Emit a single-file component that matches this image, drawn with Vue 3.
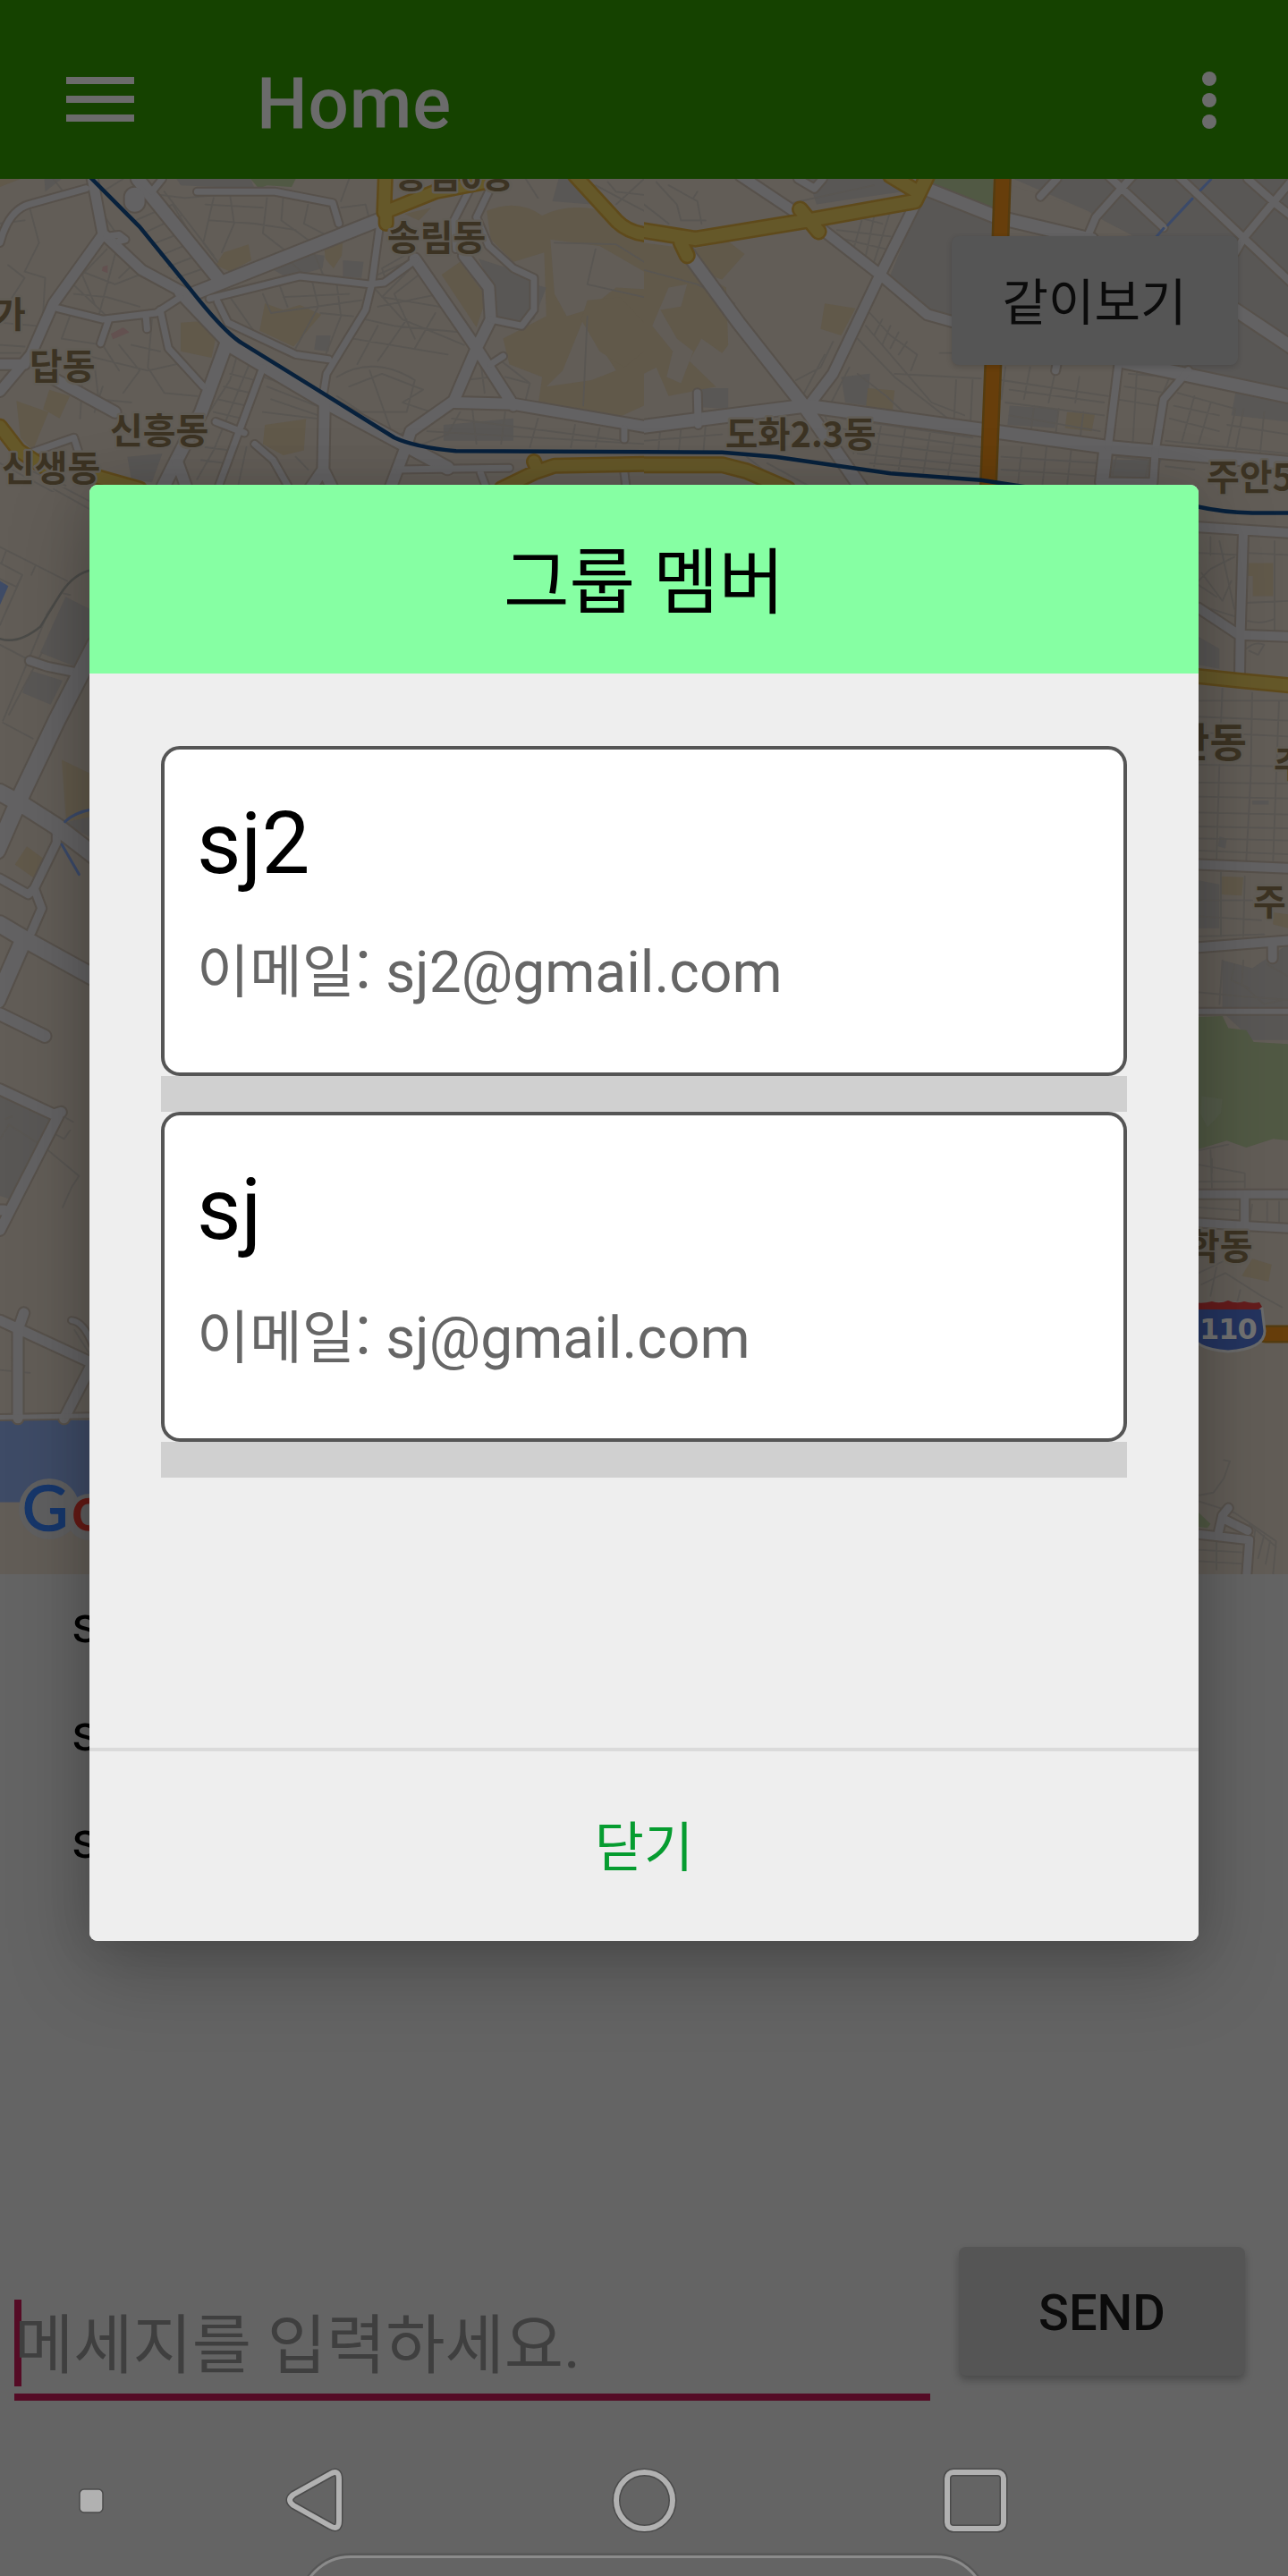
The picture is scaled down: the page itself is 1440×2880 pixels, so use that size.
<script setup>
import { ref } from 'vue'

const members = ref([
  { name: 'sj2', email: 'sj2@gmail.com' },
  { name: 'sj', email: 'sj@gmail.com' },
])
const messages = ref(['s', 's', 's'])

// Each tile keeps its own local grid; strokes stay in screen pixels.
const tiles = [
  {
    id: 'nw',
    transform: 'scale(0.4592 0.35714)',
    areas: [
      { c: 'hill', d: 'M525 830L545 790L605 765L612 815L560 850ZM790 780L835 750L832 800L812 840L792 810ZM645 950L690 970L730 955L782 985L715 1085L632 1035ZM440 1010L495 1005L530 1030L515 1120L440 1100ZM1075 860L1120 820L1185 930L1160 1025ZM1185 660Q1260 620 1320 675Q1390 630 1480 665L1568 750V1270L1500 1310L1420 1280L1310 1270L1320 1180L1240 1140L1225 1060L1330 990L1325 790L1250 820L1195 750ZM40 1255L118 1290L80 1410L50 1370ZM120 1220L170 1240L145 1310L105 1280ZM645 1330L745 1312L740 1410L690 1425L640 1390ZM0 560H50L0 585ZM985 670L1050 650L1020 690Z' },
      { c: 'land', d: 'M1340 750L1460 770L1568 850V905L1500 900L1430 970L1380 990L1350 920ZM1420 1000L1370 1160L1330 1210L1440 1190L1500 1160Z' },
      { c: 'hill', d: 'M1430 940L1510 930L1568 1010V1100L1520 1150L1460 1100L1415 1000Z' },
      { c: 'block', d: 'M1165 810L1250 845L1300 890L1330 900L1300 1000L1250 1010L1205 985L1195 890ZM660 840L735 790L790 800L785 840L700 870ZM835 815L885 820L880 870L835 865ZM430 560H610L620 590L440 580ZM1360 560H1410L1440 640L1345 630ZM310 1430L395 1420L370 1510L320 1500ZM1080 1330L1250 1310V1380L1080 1380ZM770 1050L805 1050L800 1100L765 1095ZM108 560H150L110 600Z' },
      { c: 'park', d: 'M610 560H720L710 585L650 580L630 590Z' },
      { c: 'pink', d: 'M250 835L262 830L262 855L248 848ZM270 1045L300 1025L315 1040L275 1062Z' },
    ],
    minor: 'M70 640L95 760L60 850L110 870L105 980M0 700L60 690M20 830L60 870L20 950M130 560L160 610M250 600L300 560M235 640L330 820L290 870M260 780L200 860L230 950M170 880L260 990M200 850L280 890L340 860M180 920L260 930L340 960M290 750L240 990M330 690L420 640L510 830M350 730L440 675M370 765L460 720M390 800L475 755M410 835L500 790M430 870L520 830M400 600L520 800M390 610L450 620L620 600M520 620L495 760L530 820M560 610L570 700L540 790M650 620L640 730L690 780M690 610L685 690L760 760M750 640L740 700L800 740M830 650L890 640L900 690M850 560L830 630M500 640L640 650M510 690L620 700L720 720M700 810L740 860M760 780L790 870M960 720L985 800L930 840L940 880M990 820L920 860M1000 840L930 930L1070 960M1020 860L960 920L1010 1060M910 900L980 1000L1130 1080M920 960L1070 920M890 1000L960 1020L1120 1040M860 1060L1090 1110M920 1020L870 1140M990 1000L920 1130M1060 980L1010 1090M680 890L700 960M760 880L775 960L720 1090M820 890L830 990L790 1120M560 930L620 1040M640 920L660 980L880 940M690 930L850 920M780 980L860 990M820 1180Q910 1110 1010 1190L990 1290L880 1290L820 1240M850 1210L930 1170L1030 1220L980 1260L1050 1290M870 1290L940 1380L990 1350M900 1160L950 1340M170 990L150 1060L250 1080L290 1160M200 1110L360 1160L430 1140M290 1080L340 1160L300 1230M230 1140L240 1250L320 1260M370 1000L360 1150L400 1230L480 1240M320 1080L390 1100M0 1080L60 1085M0 1105L50 1105M0 1010L90 1020M250 1210L230 1290M200 1200L195 1310M580 1100L560 1190L500 1310M610 1130L520 1410L480 1500M560 1170L620 1190M545 1210L610 1230M530 1250L600 1270M520 1290L590 1310M500 1400L560 1410M490 1440L550 1450M640 1180L780 1240M650 1210L770 1270M660 1250L775 1300M600 1400L580 1520M640 1290L770 1310M720 1430L750 1470M1120 1290L1090 1360L1030 1390M1150 1280L1160 1390M1230 1290L1220 1390M1310 1310L1290 1400M1400 1330L1390 1400M1460 1340L1450 1400M1040 1350L1568 1390M1100 1310L1520 1380M1130 1190L1200 1180L1220 1240M1170 1130L1180 1230M1220 1130L1290 1200L1280 1250M1230 1180L1290 1200M1430 990L1420 1270M1450 780L1430 890L1568 930M1350 760L1500 765L1568 820M1280 560L1310 620M1450 580L1568 660M1480 570L1500 600L1568 610M1500 640L1568 560M0 1450L170 1568M50 1460L160 1520',
    roads: [
      { w: 11, d: 'M225 560L250 730L345 845L460 925M250 735L130 950L75 1110L0 1225M0 1140L60 1140' },
      { w: 14, d: 'M335 560L530 870M470 920L920 690M440 915L570 1090L800 1265L1090 1465M550 1080L490 1290L430 1440L395 1530' },
      { w: 12, d: 'M430 1440L455 1530M130 1185L280 1290M790 1260L787 1470L810 1530M787 1470L755 1530M1010 810L1160 1090L1250 1270M1160 1090L1105 1255L1000 1350L985 1410L950 1530M1105 1260L1250 1265L1568 1335M1130 800L1190 900L1195 1000L1160 1090' },
      { w: 7, d: 'M480 600L670 600L810 635L825 700M0 760Q20 660 70 640L210 590M340 560L370 600L395 560M510 935L730 865L900 890L935 885L1010 815M925 700L905 890L890 970L795 1170L785 1250M530 945L555 1010L720 1110L800 1125M140 965L250 1000L380 980L440 930M390 970L410 1090L495 1210M265 1000L245 1075M355 985L358 1030M640 1150L530 1530M525 1320L595 1355M620 1390L665 1440L705 1530M80 1415L180 1370L190 1410M1195 1140L1225 1115M1520 1340L1520 1375M260 740L290 735L305 750L290 755M1195 1000L1270 1020L1300 970L1300 870L1250 840L1190 770L1160 680L1190 600M1145 590L1105 690L1110 780M970 1470L1240 1465M1170 1480L1185 1530M1520 1480L1525 1530' },
      { w: 22, d: 'M328 618L328 632' },
    ],
    yellow: [
      { w: 13, d: 'M938 560L935 665L1060 600L1180 570M940 660L940 700M1400 550L1500 690Q1530 730 1580 735M0 1335L45 1410L105 1460M230 1490L340 1530M1580 1452L1350 1458L1300 1480L1220 1530M1300 1445L1310 1475' },
    ],
    rail: 'M220 555L340 710L460 900Q545 1040 590 1075L760 1210L960 1370Q1010 1400 1110 1412L1570 1415',
  },
  {
    id: 'ne',
    transform: 'translate(720 0) scale(0.4592 0.35714)',
    areas: [
      { c: 'block', d: 'M400 560H600L630 600L520 620L420 640ZM680 610L850 690L850 1000L700 980L600 860ZM900 560L1568 560V1240L1300 1160L1180 1130L1180 740L1080 660ZM480 1180L550 1170L545 1270L490 1260ZM140 1215L205 1215L205 1280L140 1275ZM890 1270L1010 1280L1000 1340L885 1330ZM1130 1440L1260 1440L1240 1510L1130 1510ZM1440 1230L1568 1260V1320L1430 1300Z' },
      { c: 'park', d: 'M700 560H850V650L700 600Z' },
      { c: 'land', d: 'M895 580L1060 650L1190 738L1080 735L900 690Z' },
      { c: 'hill', d: 'M0 760L120 780L205 755L245 795L190 875L130 850L200 900L205 1080L190 1105L140 1060L110 1130L175 1210L60 1240L30 1150L0 1170ZM440 950L515 965L480 1050L430 1030ZM545 1215L610 1222L605 1290L540 1280ZM1030 1290L1098 1295L1090 1350L1025 1340Z' },
      { c: 'land', d: 'M60 900L105 890L90 960L40 970L80 1060L120 1100L90 1200L55 1180L70 1100L20 1020Z' },
    ],
    minor: 'M0 640L60 700M30 570L80 640L90 690L150 690M60 580L130 630L140 700M120 620L130 600M360 635L560 580M0 845L130 890L220 950M470 720L600 740M490 690L520 680L580 700M530 690L510 780M560 680L540 800M600 660L560 820M460 740L590 780M550 980L600 1050L665 1110L650 1160M540 1020L700 1260L780 1300M520 1060L610 1180L750 1320M580 1000L560 1050M600 1020L580 1080M620 1040L600 1090M640 1070L620 1110M460 1070L430 1150L370 1190M440 1110L390 1230M610 1170L820 1185M760 1190L755 1310M800 1190L795 1320M500 1150L440 1300M520 1170L590 1240L640 1300M870 1190L1130 1240M880 1150L870 1250M940 1150L925 1250M1000 1170L985 1260M1060 1180L1050 1260M890 1220L1120 1260M880 1260L1120 1300M890 1300L1110 1350M950 1270L940 1370M1010 1280L1000 1380M1070 1290L1060 1390M1180 1170L1280 1180L1250 1270L1150 1250M1170 1210L1270 1230M1200 1160L1190 1390M1300 1230L1440 1280L1420 1400M1290 1270L1400 1300M1280 1310L1400 1350M1340 1240L1310 1380M1380 1260L1350 1390M1460 1280L1440 1410M1510 1290L1500 1420M1420 1330L1568 1360M1270 1380L1568 1420M440 1300L470 1400L540 1510M480 1310L800 1370M470 1340L820 1400M500 1380L820 1430M520 1420L820 1460M550 1450L810 1480M530 1300L510 1420M580 1310L560 1460M640 1310L620 1470M700 1330L680 1480M760 1340L740 1490M0 1350L200 1310M0 1380L190 1360M40 1340L35 1410M90 1340L85 1410M150 1330L145 1410M870 1430L1110 1450M870 1470L1100 1490M920 1400L910 1520M980 1400L970 1520M1040 1410L1030 1520M1150 1430L1230 1440L1220 1500L1140 1490ZM1270 1460L1340 1470M250 1430L330 1510M300 1450L400 1520M720 1105L750 1105',
    roads: [
      { w: 11, d: 'M235 550L375 670M415 700L575 860L690 985L760 1010M660 640L575 860L460 1170L395 1280' },
      { w: 14, d: 'M105 790L230 1010L395 1280L530 1530M0 1335L395 1270L820 1345L1130 1400L1568 1450M685 590L860 680L1090 750M1160 1130L1568 1240M1440 970L1580 1090M1125 1400L1115 1510' },
      { w: 8, d: 'M375 560L415 590L435 560M965 615L1005 560M1130 550L1265 712M1190 550L1100 680L1080 740M1300 550L1460 745L1580 890M1470 560L1540 640L1580 680M1580 560L1460 745L1440 790M1155 1140L1130 1400M1325 1160L1265 1250L1245 1410L1240 1510M130 1230L132 1330M1110 1508L1240 1510M1005 1140L1002 1160' },
    ],
    yellow: [
      { w: 14, d: 'M-10 720L125 748L400 690L660 630L690 550M600 550L665 600M380 655L425 725M90 760L105 800M-10 1455L190 1455L250 1475L350 1530' },
    ],
    orange: 'M873 550L868 740L850 1142L838 1530',
    rail: 'M-5 1415L190 1416L320 1430L600 1482L820 1503L960 1530',
    stream: 'M1380 562L1355 595M1335 622L1275 705M1265 715L1245 745',
  },
  {
    id: 'west',
    transform: 'translate(0 520) scale(0.33333 0.44643)',
    areas: [
      { c: 'block', d: 'M220 330L300 360V440L255 505L135 470ZM105 515L210 540L170 600L75 570ZM220 895L300 880V930L260 915Z' },
      { c: 'hill', d: 'M207 738L310 775V880L222 893ZM90 955L145 985L115 1035L50 1000Z' },
      { c: 'water', d: 'M0 290L28 303L0 350Z' },
    ],
    minor: 'M0 205L225 290M0 245L75 275L55 305L0 285M20 215L5 245M120 250L105 275M75 275L0 400M0 450L95 487M150 390L10 640M155 375L205 320L235 325M30 625L140 470M10 645L110 685M180 60L300 110M210 55L300 90M430 0L450 40',
    roads: [
      { w: 9, d: 'M100 490L160 505L260 520M0 1035L95 1075L115 1060L190 945L190 915M115 1060L140 1110L105 1170' },
      { w: 18, d: 'M320 450L190 640L75 820L-10 965M0 820L75 850L190 905L320 980M0 1150L90 1190L320 1285M75 1195L-10 1340' },
      { w: 13, d: 'M0 1375L150 1430' },
    ],
    yellow: [],
    track: 'M0 435Q60 450 135 405L205 320Q250 270 310 262',
    stream: 'M218 893Q250 870 310 862M207 950L265 1025',
  },
  {
    id: 'southwest',
    transform: 'translate(0 1200) scale(0.33333 0.63776)',
    areas: [
      { c: 'block', d: 'M0 40L165 80L30 220L0 215Z' },
      { c: 'water', d: 'M0 608H310V752H0Z' },
    ],
    minor: 'M0 115L30 90L150 130L265 180L240 200L210 235M20 80L40 75M180 105L215 115L235 100M245 85L210 75M0 520L100 525M250 450L310 500',
    roads: [
      { w: 11, d: 'M0 28L180 72L205 68M195 75L0 275M-5 240L15 240M0 433L310 508M60 605L60 450L80 420M215 605L310 508' },
      { w: 6, d: 'M240 433Q280 435 310 475' },
      { w: 5, d: 'M0 603L310 600' },
    ],
    yellow: [],
  },
  {
    id: 'east',
    transform: 'translate(1300 520) scale(0.33333 0.44643)',
    areas: [
      { c: 'block', d: 'M120 430L190 460V510L120 500ZM120 1040L190 1050V1160H120ZM200 1240L300 1260L420 1200V1440L300 1440L200 1370ZM300 840H355V850H300ZM190 930L215 935L210 960L185 955Z' },
      { c: 'hill', d: 'M285 245H370V328H302V278H285ZM195 1030L270 1032L265 1078L195 1075ZM370 1120L420 1125V1160L370 1150Z' },
      { c: 'park', d: 'M120 1382L200 1380L220 1410L280 1415L305 1445L430 1450V1600H120Z' },
    ],
    minor: 'M120 220L250 225M120 290L160 260L240 230M160 180V225M190 190L240 360M130 270L200 340L230 290M120 300L180 330M120 350L245 380M280 220L430 225M375 190V420M280 345L430 340M285 390Q330 400 375 385M280 460Q310 440 340 450L320 475L290 465M120 590H430M120 630L430 640M120 750L430 755M120 795L430 798M120 830L430 835M120 870L430 875M120 905L430 910M120 935L430 940M120 965L430 975M120 670L300 675L430 680M200 560L195 650M300 570L295 780L280 990M190 750L180 990M390 590L370 990M195 1020V1180M275 1030L270 1180M120 1090H300M120 1130L330 1140M120 1180L340 1175M200 1240L190 1350M120 1320L260 1330L430 1340M270 1240L265 1300L340 1350L400 1340M350 1250L420 1280M240 1250L230 1290L290 1310',
    roads: [
      { w: 10, d: 'M120 155L430 170M270 170L260 420L258 520M120 358L255 425L430 430M120 1000L430 1010M120 1208L430 1190M368 1200V1235' },
      { w: 6, d: 'M120 1368L430 1368' },
    ],
    yellow: [{ w: 13, d: 'M110 528L260 540L430 552' }],
    rail: 'M110 103Q200 118 300 120L430 120',
  },
  {
    id: 'southeast',
    transform: 'translate(1300 1200) scale(0.33333 0.63776)',
    areas: [
      { c: 'park', d: 'M120 -10H430V118L370 115L280 130L215 118L120 133ZM120 770L160 790L150 797L120 795Z' },
      { c: 'glade', d: 'M130 40L200 45L195 70L150 95L125 70Z' },
      { c: 'hill', d: 'M300 325L365 335L355 365L265 355Z' },
    ],
    minor: 'M120 135L220 125M160 135L165 200M120 160L275 175V200M165 175L165 150M120 190H275M120 235L260 240M300 230L290 265M350 225V265M390 225V265M120 350L200 330M130 370L210 350L330 390L400 410M180 340L160 390M260 380L240 420M120 740L170 735L205 710L225 680L205 678M120 750L240 770L380 820L370 878M290 790L380 830M120 835L270 840M120 855L270 860M180 810V870M310 800L300 840M340 810L320 850M360 820L345 860',
    roads: [
      { w: 9, d: 'M120 212L430 212M275 215V260M120 262L300 268L430 272M120 808L290 818L280 890M185 810L200 775L220 762M200 780L285 802' },
    ],
    yellow: [],
    orange: 'M345 457H440',
  },
]

const labels = [
  { t: '송림6동', x: 441, y: 210, s: 40 },
  { t: '송림동', x: 433, y: 280, s: 40 },
  { t: '가', x: -8, y: 366, s: 40 },
  { t: '답동', x: 33, y: 424, s: 40 },
  { t: '신흥동', x: 123, y: 496, s: 40 },
  { t: '신생동', x: 2, y: 538, s: 40 },
  { t: '도화2.3동', x: 811, y: 500, s: 39.5 },
  { t: '주안5', x: 1349, y: 548, s: 40 },
  { t: '안동', x: 1311, y: 847, s: 45 },
  { t: '주', x: 1424, y: 869, s: 40 },
  { t: '주', x: 1401, y: 1023, s: 40 },
  { t: '학동', x: 1327, y: 1408, s: 40 },
]
</script>

<template>
  <div class="screen">
    <header class="app-bar">
      <svg class="menu" width="76" height="50" viewBox="0 0 76 50">
        <path d="M0 4H76M0 25H76M0 46H76" stroke="#6b6b6b" stroke-width="8" />
      </svg>
      <h1>Home</h1>
      <svg class="more" width="16" height="64" viewBox="0 0 16 64">
        <g fill="#6b6b6b"><circle cx="8" cy="8" r="8" /><circle cx="8" cy="32" r="8" /><circle cx="8" cy="56" r="8" /></g>
      </svg>
    </header>

    <section class="map">
      <svg width="1440" height="1560" viewBox="0 200 1440 1560">
        <defs>
          <clipPath id="clip-nw"><rect x="0" y="200" width="720" height="350" /></clipPath>
          <clipPath id="clip-ne"><rect x="720" y="200" width="720" height="350" /></clipPath>
          <clipPath id="clip-west"><rect x="0" y="545" width="110" height="675" /></clipPath>
          <clipPath id="clip-southwest"><rect x="0" y="1210" width="110" height="550" /></clipPath>
          <clipPath id="clip-east"><rect x="1330" y="545" width="110" height="675" /></clipPath>
          <clipPath id="clip-southeast"><rect x="1330" y="1200" width="110" height="560" /></clipPath>
        </defs>
        <rect class="land" y="200" width="1440" height="1560" />
        <g v-for="t in tiles" :key="t.id" :clip-path="`url(#clip-${t.id})`">
          <g class="lines" :transform="t.transform">
            <path v-for="(a, i) in t.areas" :key="'a' + i" :class="a.c" :d="a.d" />
            <path class="minor" :d="t.minor" />
            <path v-for="(r, i) in t.roads" :key="'c' + i" class="casing" :d="r.d" :stroke-width="r.w + 4" />
            <path v-for="(r, i) in t.roads" :key="'r' + i" class="road" :d="r.d" :stroke-width="r.w" />
            <path v-for="(r, i) in t.yellow" :key="'z' + i" class="yellow-edge" :d="r.d" :stroke-width="r.w + 5" />
            <path v-for="(r, i) in t.yellow" :key="'y' + i" class="yellow" :d="r.d" :stroke-width="r.w" />
            <path v-if="t.orange" class="orange-edge" :d="t.orange" />
            <path v-if="t.orange" class="orange" :d="t.orange" />
            <path v-if="t.track" class="track" :d="t.track" />
            <path v-if="t.stream" class="stream" :d="t.stream" />
            <path v-if="t.rail" class="rail" :d="t.rail" />
          </g>
        </g>
        <text v-for="(l, i) in labels" :key="i" class="label" :x="l.x" :y="l.y" :font-size="l.s">{{ l.t }}</text>
        <path d="M1335 1463Q1373 1450 1411 1463L1414 1488Q1414 1508 1373 1511Q1332 1508 1332 1488Z" fill="#24345f" stroke="#6a6a6a" stroke-width="3" />
        <path d="M1334 1464V1456Q1345 1458 1355 1455Q1364 1458 1373 1454Q1382 1458 1391 1455Q1400 1458 1408 1456L1411 1461L1407 1464Z" fill="#641c1c" />
        <text class="shield" x="1341" y="1497">110</text>
        <g fill="#5f5f60"><circle cx="55" cy="1687" r="34" /><circle cx="100" cy="1696" r="26" /></g>
        <text class="google" y="1711"><tspan x="25" fill="#17376b" stroke="#17376b">G</tspan><tspan x="80" fill="#651a15" stroke="#651a15">o</tspan></text>
      </svg>
      <button class="btn together">같이보기</button>
    </section>

    <ul class="messages">
      <li v-for="(m, i) in messages" :key="i">{{ m }}</li>
    </ul>

    <div class="composer">
      <div class="field"><span class="caret"></span><span class="hint">메세지를 입력하세요.</span></div>
      <button class="btn send">SEND</button>
    </div>

    <nav class="nav">
      <svg width="1440" height="160" viewBox="0 2720 1440 160" fill="none">
        <rect x="89" y="2783" width="26" height="26" rx="5" fill="#b1b1b1" stroke="#4b4b4b" stroke-width="1.5" />
        <g stroke="#4b4b4b" stroke-width="9" stroke-linejoin="round">
          <path d="M369 2766Q379 2760 379 2772V2818Q379 2830 369 2824L328 2801Q320 2795 328 2789Z" />
          <circle cx="720.5" cy="2795.5" r="31.5" />
          <rect x="1059" y="2764" width="63" height="63" rx="7" />
        </g>
        <g stroke="#b1b1b1" stroke-width="6" stroke-linejoin="round">
          <path d="M369 2766Q379 2760 379 2772V2818Q379 2830 369 2824L328 2801Q320 2795 328 2789Z" />
          <circle cx="720.5" cy="2795.5" r="31.5" />
          <rect x="1059" y="2764" width="63" height="63" rx="7" />
        </g>
        <rect x="335" y="2857" width="768" height="114" rx="57" stroke="#575757" stroke-width="5" />
        <rect x="336" y="2858.5" width="766" height="112" rx="56" stroke="#8b8b8b" stroke-width="3" />
      </svg>
    </nav>

    <div class="dialog">
      <h2>그룹 멤버</h2>
      <div class="body">
        <template v-for="m in members" :key="m.email">
          <article class="card">
            <h3>{{ m.name }}</h3>
            <p>이메일<span class="colon">:</span> {{ m.email }}</p>
          </article>
          <div class="divider"></div>
        </template>
      </div>
      <button class="close">닫기</button>
    </div>
  </div>
</template>

<style>
body { margin: 0; background: #646464; }
</style>

<style scoped>
.screen { position: relative; display: flex; flex-direction: column; width: 1440px; height: 2880px; overflow: hidden; background: #646464; font-family: Roboto, "Noto Sans CJK KR", sans-serif; }
h1, h2, h3, p, ul { margin: 0; padding: 0; font-weight: 400; }
svg { display: block; }
button { font-family: inherit; border: 0; padding: 0; }
.app-bar { box-sizing: border-box; flex: none; height: 200px; padding: 24px 80px 2px 74px; display: flex; align-items: center; background: #154200; }
.app-bar h1 { margin: 10px auto 0 137px; font-size: 80px; line-height: 96px; font-weight: 500; letter-spacing: .8px; color: #6b6b6b; }
.more { margin-top: 1px; }
.map { position: relative; flex: none; height: 1560px; }
.land { fill: #625d57; }
.hill { fill: #61594a; }
.block { fill: #595755; }
.park { fill: #515944; }
.glade { fill: #545b4a; }
.pink { fill: #635150; }
.water { fill: #3e4b66; }
.lines path { vector-effect: non-scaling-stroke; }
.minor, .casing, .road, .yellow, .yellow-edge, .orange, .orange-edge, .rail, .stream, .track { fill: none; stroke-linejoin: round; stroke-linecap: round; }
.minor { stroke: #595652; stroke-width: 1.8; }
.casing { stroke: #57514b; }
.road { stroke: #636263; }
.yellow-edge { stroke: #5f4a1b; }
.yellow { stroke: #655829; }
.orange-edge { stroke: #553c10; stroke-width: 20; }
.orange { stroke: #673e0b; stroke-width: 15; }
.rail { stroke: #08213c; stroke-width: 4.5; }
.stream { stroke: #3b4a6a; stroke-width: 3; }
.track { stroke: #4b4b48; stroke-width: 2.5; }
.label { font-family: "Noto Sans CJK KR", sans-serif; font-weight: 700; fill: #3c3323; stroke: #605c55; stroke-width: 5; stroke-linejoin: round; paint-order: stroke; }
.shield { font: 700 32px "DejaVu Sans", sans-serif; letter-spacing: -1px; fill: #727272; }
.google { font: 400 70px Lato, sans-serif; stroke-width: 1.6; }
.btn { width: 320px; height: 144px; border-radius: 8px; background: #555; color: #0b0b0b; font-size: 56px; box-shadow: 0 5px 8px rgba(0, 0, 0, .25); }
.together { position: absolute; left: 1064px; top: 64px; line-height: 150px; text-indent: -1px; box-shadow: 0 2px 6px rgba(0, 0, 0, .16); }
.messages { flex: none; box-sizing: border-box; height: 744px; padding: 0 80px; list-style: none; font-size: 58px; color: #000; }
.messages li { height: 120.5px; line-height: 113px; }
.composer { flex: none; height: 216px; display: flex; align-items: flex-start; justify-content: space-between; padding: 8px 48px 0 16px; box-sizing: border-box; }
.field { display: flex; align-items: flex-start; box-sizing: border-box; width: 1024px; height: 172px; padding-top: 59px; border-bottom: 8px solid #550b25; }
.caret { width: 8px; height: 97px; background: #550b25; }
.hint { margin-left: -8px; font-size: 72px; line-height: 104px; color: #3f3f3f; white-space: nowrap; }
.send { font-weight: 500; line-height: 149px; }
.nav { flex: none; height: 160px; }
.dialog { position: absolute; left: 100px; top: 542px; width: 1240px; height: 1628px; display: flex; flex-direction: column; border-radius: 9px; overflow: hidden; background: #eee; box-shadow: 0 30px 90px rgba(0, 0, 0, .25), 0 0 50px rgba(0, 0, 0, .1); }
.dialog h2 { flex: none; height: 211px; line-height: 220px; text-align: center; font-size: 80px; background: #86ffa3; color: #000; }
.body { flex: 1; padding: 81px 80px 0; }
.card { box-sizing: border-box; height: 369px; padding: 49px 36px 0; border: 4px solid #555; border-radius: 21px; background: #fff; }
.card h3 { font-size: 96px; line-height: 112px; color: #000; }
.card p { height: 76px; margin-top: 46px; font-size: 64px; line-height: 76px; letter-spacing: .05px; color: #666; white-space: nowrap; }
.colon { position: relative; top: -5px; font-size: 76px; line-height: 1; }
.divider { height: 40px; background: #d0d0d0; }
.close { flex: none; height: 216px; border-top: 4px solid #dadada; background: #eee; font-size: 60px; line-height: 217px; color: #069c30; }
</style>
